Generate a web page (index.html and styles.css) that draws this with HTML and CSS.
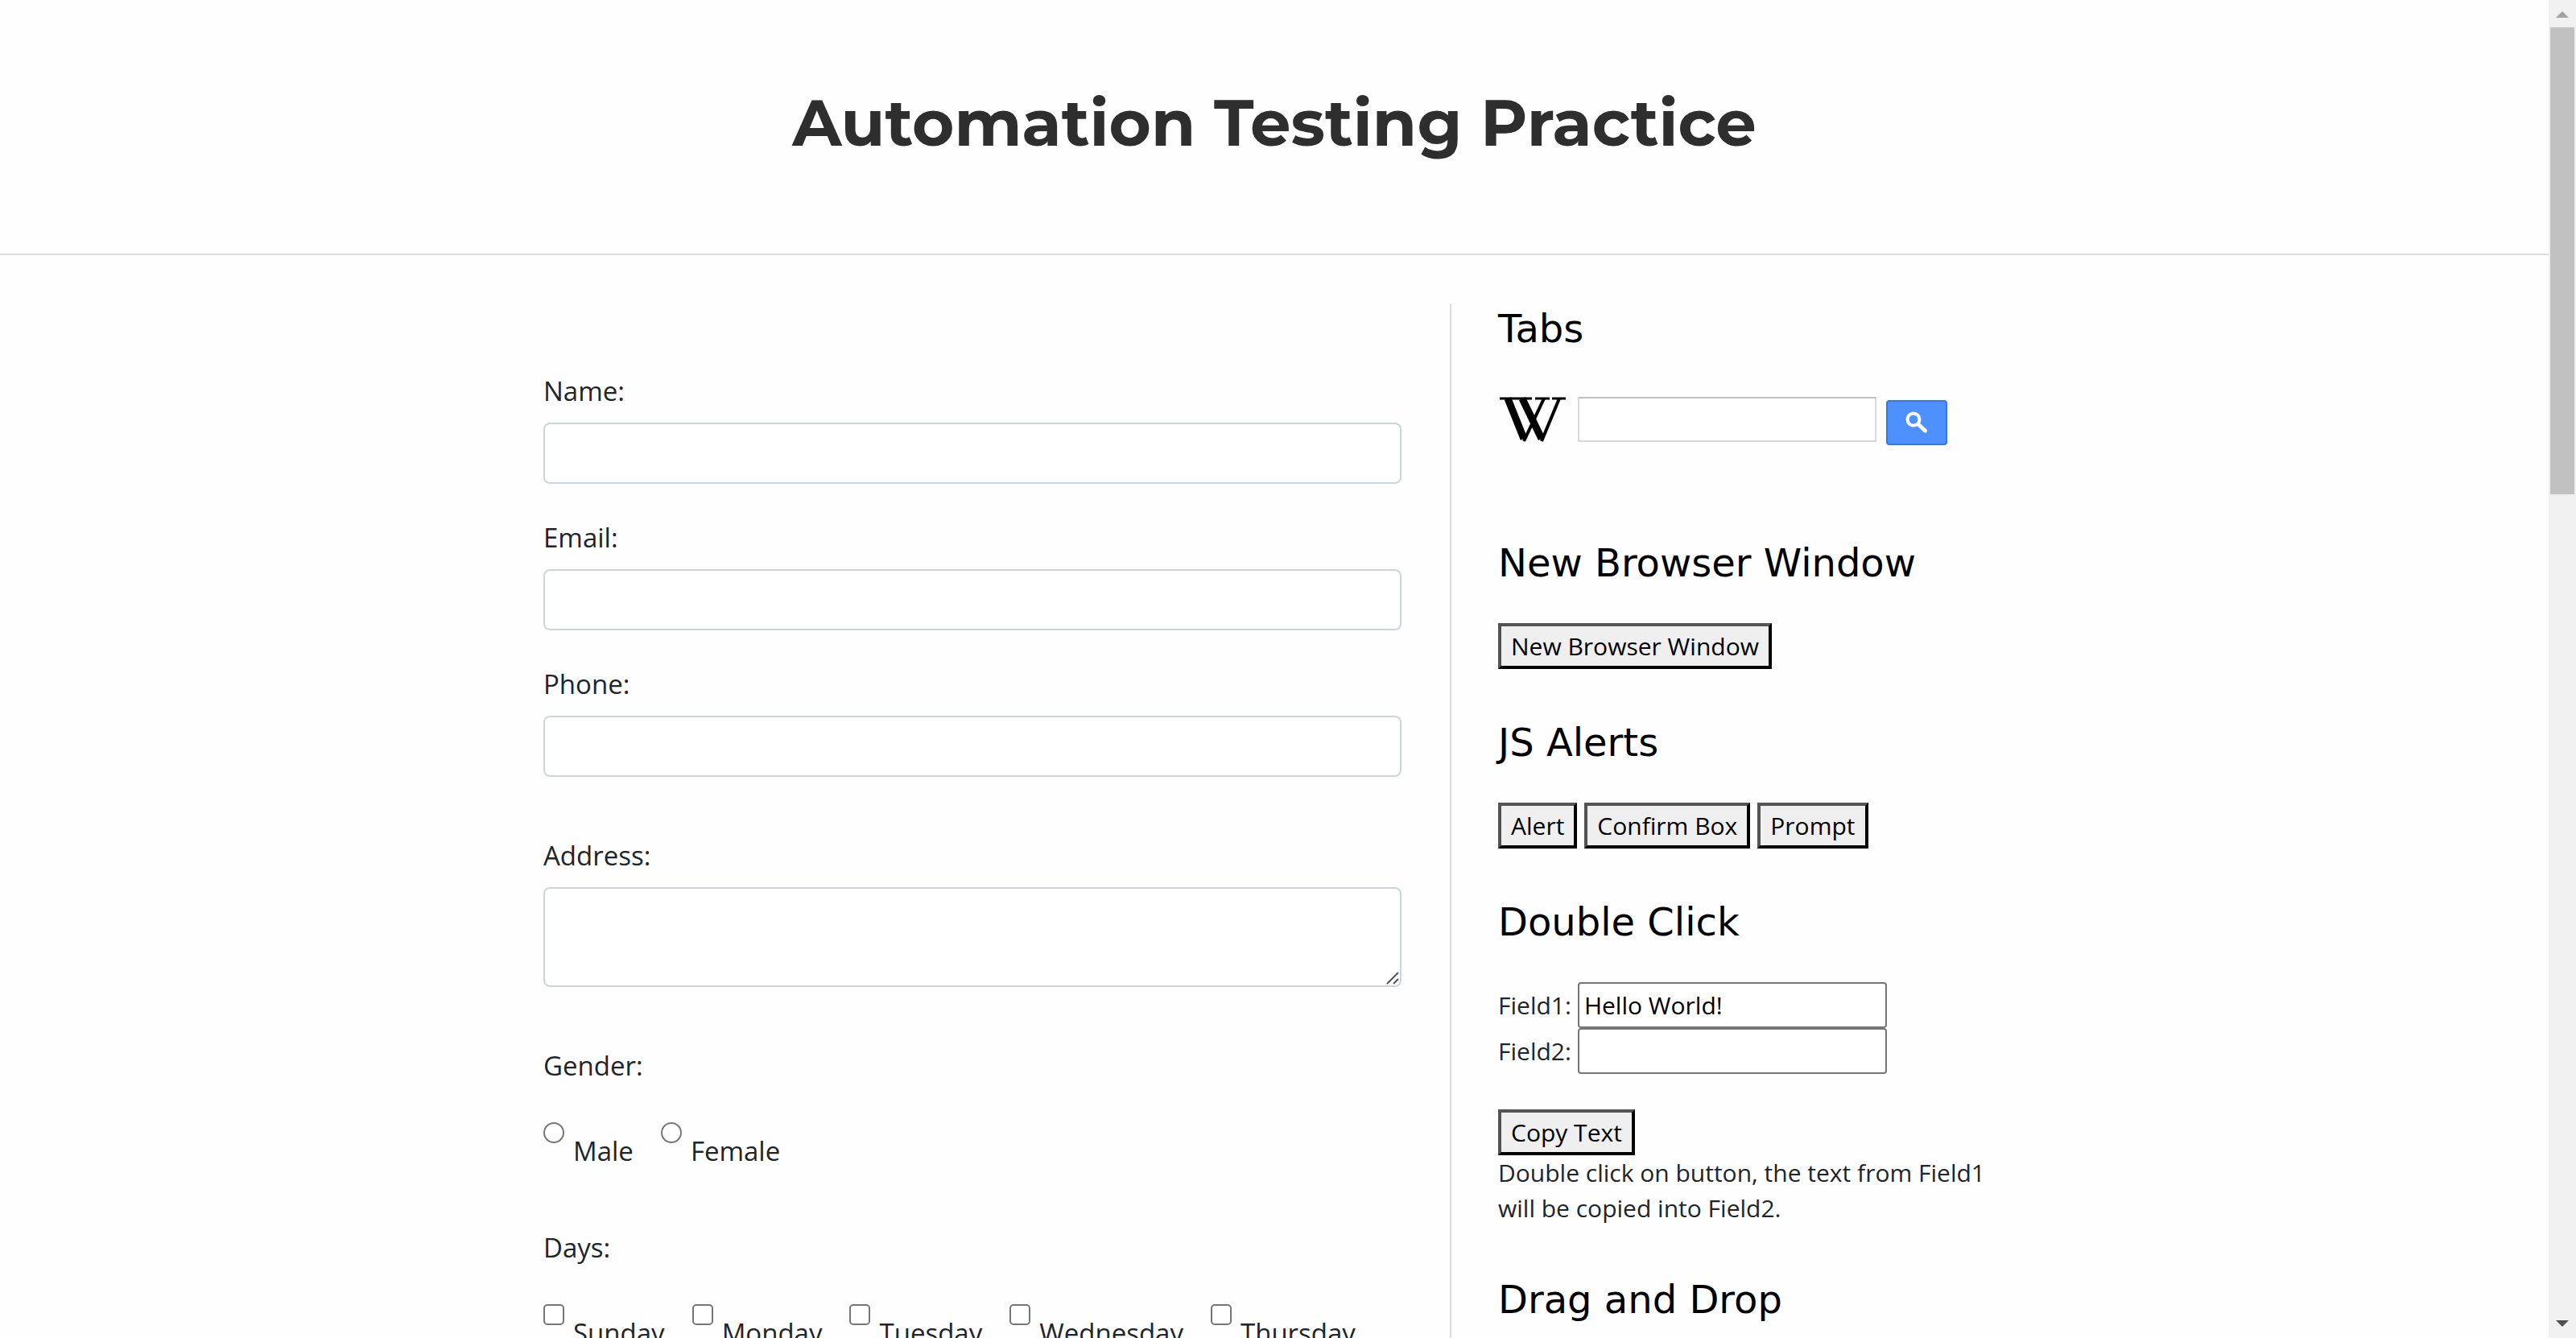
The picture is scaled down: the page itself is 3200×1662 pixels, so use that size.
FILE: index.html
```html
<!DOCTYPE html>
<html lang="en">
<head>
<meta charset="utf-8">
<title>Automation Testing Practice</title>
<link rel="stylesheet" href="styles.css">
</head>
<body>
<div class="page">
  <header class="banner"><h1>Automation Testing Practice</h1></header>
  <div class="columns">
    <main class="form">
      <div class="field"><label for="name">Name:</label><input class="control" id="name" type="text"></div>
      <div class="field"><label for="email">Email:</label><input class="control" id="email" type="text"></div>
      <div class="field field-last"><label for="phone">Phone:</label><input class="control" id="phone" type="text"></div>
      <div class="field field-last">
        <label for="address">Address:</label>
        <textarea class="control control-tall" id="address"></textarea>
        <svg class="grip" viewBox="0 0 16 16" fill="none" stroke="#555" stroke-width="2" aria-hidden="true"><path d="M1 15L15 1M9 15L15 9"/></svg>
      </div>
      <fieldset class="choices">
        <legend>Gender:</legend>
        <div class="options">
          <label class="option"><input type="radio" name="gender"><span>Male</span></label>
          <label class="option"><input type="radio" name="gender"><span>Female</span></label>
        </div>
      </fieldset>
      <fieldset class="choices">
        <legend>Days:</legend>
        <div class="options">
          <label class="option"><input type="checkbox"><span>Sunday</span></label>
          <label class="option"><input type="checkbox"><span>Monday</span></label>
          <label class="option"><input type="checkbox"><span>Tuesday</span></label>
          <label class="option"><input type="checkbox"><span>Wednesday</span></label>
          <label class="option"><input type="checkbox"><span>Thursday</span></label>
        </div>
      </fieldset>
    </main>
    <aside class="widgets">
      <section class="widget widget-search">
        <h2>Tabs</h2>
        <form class="search">
          <svg class="wiki" viewBox="0 0 84 56" role="img" aria-label="Wikipedia" fill="none" stroke="#000">
            <g stroke-width="3"><path d="M1 2H41M45 2H63M66 2H83"/></g>
            <g stroke-width="9"><path d="M11 2L31 52M29 2L53 52"/></g>
            <g stroke-width="4"><path d="M31 55L56 2M53 55L75 2"/></g>
          </svg>
          <input class="search-box" type="text" aria-label="Search Wikipedia">
          <button class="search-button" type="button" aria-label="Search">
            <svg viewBox="0 0 28 28" fill="none" stroke="#fff"><circle cx="10" cy="10" r="7.5" stroke-width="4"/><path d="M17 17L24.5 24" stroke-width="5" stroke-linecap="round"/></svg>
          </button>
        </form>
      </section>
      <section class="widget">
        <h2>New Browser Window</h2>
        <div class="buttons"><button type="button" class="push">New Browser Window</button></div>
      </section>
      <section class="widget">
        <h2>JS Alerts</h2>
        <div class="buttons">
          <button type="button" class="push">Alert</button>
          <button type="button" class="push">Confirm Box</button>
          <button type="button" class="push">Prompt</button>
        </div>
      </section>
      <section class="widget">
        <h2>Double Click</h2>
        <div class="pair"><label for="field1">Field1:</label><input id="field1" type="text" value="Hello World!"></div>
        <div class="pair"><label for="field2">Field2:</label><input id="field2" type="text"></div>
        <div class="copy">
          <button type="button" class="push">Copy Text</button>
          <p>Double click on button, the text from Field1 will be copied into Field2.</p>
        </div>
      </section>
      <section class="widget">
        <h2>Drag and Drop</h2>
      </section>
    </aside>
  </div>
</div>
<div class="scrollbar" aria-hidden="true">
  <svg class="arrow" viewBox="0 0 34 34"><path fill="#a3a3a3" d="M9 22L17 14L25 22Z"/></svg>
  <div class="thumb"></div>
  <div class="track"></div>
  <svg class="arrow" viewBox="0 0 34 34"><path fill="#505050" d="M9 12L17 20L25 12Z"/></svg>
</div>
</body>
</html>
```
FILE: styles.css
```css
* { box-sizing: border-box; }

body {
  margin: 0;
  height: 100vh;
  display: grid;
  grid-template-columns: 1fr 34px;
  overflow: hidden;
  background: #fefefe;
  color: #212529;
  font: 33px/48px "Open Sans", "Noto Sans", sans-serif;
}

h1, h2, p { margin: 0; }
input, textarea, button { margin: 0; font: inherit; }

.page { overflow: hidden; }

.banner {
  padding: 104px 32px 113px;
  border-bottom: 2px solid #ddd;
  text-align: center;
}

.banner h1 {
  color: #2e2e2e;
  font: bold 80px/98px Montserrat, Inter, sans-serif;
}

.columns {
  display: grid;
  grid-template-columns: 1fr 690px;
  max-width: 1816px;
  margin: 60px auto 0;
}

.form { padding: 85px 60px 80px 0; }

.field { position: relative; margin-bottom: 43px; }
.field-last { margin-bottom: 74px; }
.field label { display: block; margin-bottom: 15px; }

.control {
  display: block;
  width: 100%;
  height: 76px;
  padding: 12px 24px;
  border: 2px solid #ced4da;
  border-radius: 8px;
  background: #fff;
}

.control-tall { height: 124px; resize: none; }

/* Resize grip in the corner of the text area */
.grip {
  position: absolute;
  right: 3px;
  bottom: 3px;
  width: 16px;
  height: 16px;
}

.choices { margin: 0 0 72px; padding: 0; border: 0; }
.choices legend { padding: 0; margin-bottom: 46px; }
.options { display: flex; gap: 34px; }
.option { display: flex; gap: 11px; }

.option input {
  flex: none;
  appearance: none;
  width: 26px;
  height: 26px;
  border: 2px solid #767676;
  border-radius: 5px;
  background: #fff;
}

.option input[type="radio"] { border-radius: 50%; }
.option input:checked { background: #767676; }
.option span { padding-top: 12px; }

.widgets {
  padding: 1px 0 80px 58px;
  border-left: 2px solid #ddd;
  font-size: 30px;
  line-height: 44px;
}

.widget { margin-bottom: 61px; }
.widget-search { margin-bottom: 116px; }

.widget h2 {
  margin-bottom: 45px;
  color: #000;
  font: 48px/60px Verdana, "DejaVu Sans", sans-serif;
}

.search { display: flex; align-items: flex-start; padding-top: 10px; }
.wiki { width: 84px; height: 56px; margin: 0 14px 0 1px; }

.search-box {
  width: 371px;
  height: 56px;
  padding: 0 16px;
  border: 2px solid #d9d9d9;
  border-top-color: #c0c0c0;
  background: #fff;
}

.search-button {
  display: grid;
  place-items: center;
  width: 76px;
  height: 56px;
  margin: 4px 0 0 12px;
  padding: 0;
  border: 2px solid #3079ed;
  border-radius: 4px;
  background: #4d90fe;
}

.search-button svg { width: 28px; height: 28px; }

.buttons { display: flex; gap: 9px; }

.push {
  height: 57px;
  padding: 1px 12px 0;
  border: 4px outset #000;
  background: #efefef;
  color: #000;
}

.pair { display: flex; align-items: center; gap: 8px; height: 57px; }

.pair input {
  width: 384px;
  height: 57px;
  padding: 0 6px;
  border: 2px solid #767676;
  border-radius: 4px;
  background: #fff;
  color: #000;
}

.copy { margin-top: 44px; }
.copy .push { display: block; }

.scrollbar { display: flex; flex-direction: column; background: #f0f0f0; }
.arrow { flex: none; width: 34px; height: 34px; }
.thumb { flex: 4; margin: 0 2px; background: #c1c1c1; }
.track { flex: 7; }
```
